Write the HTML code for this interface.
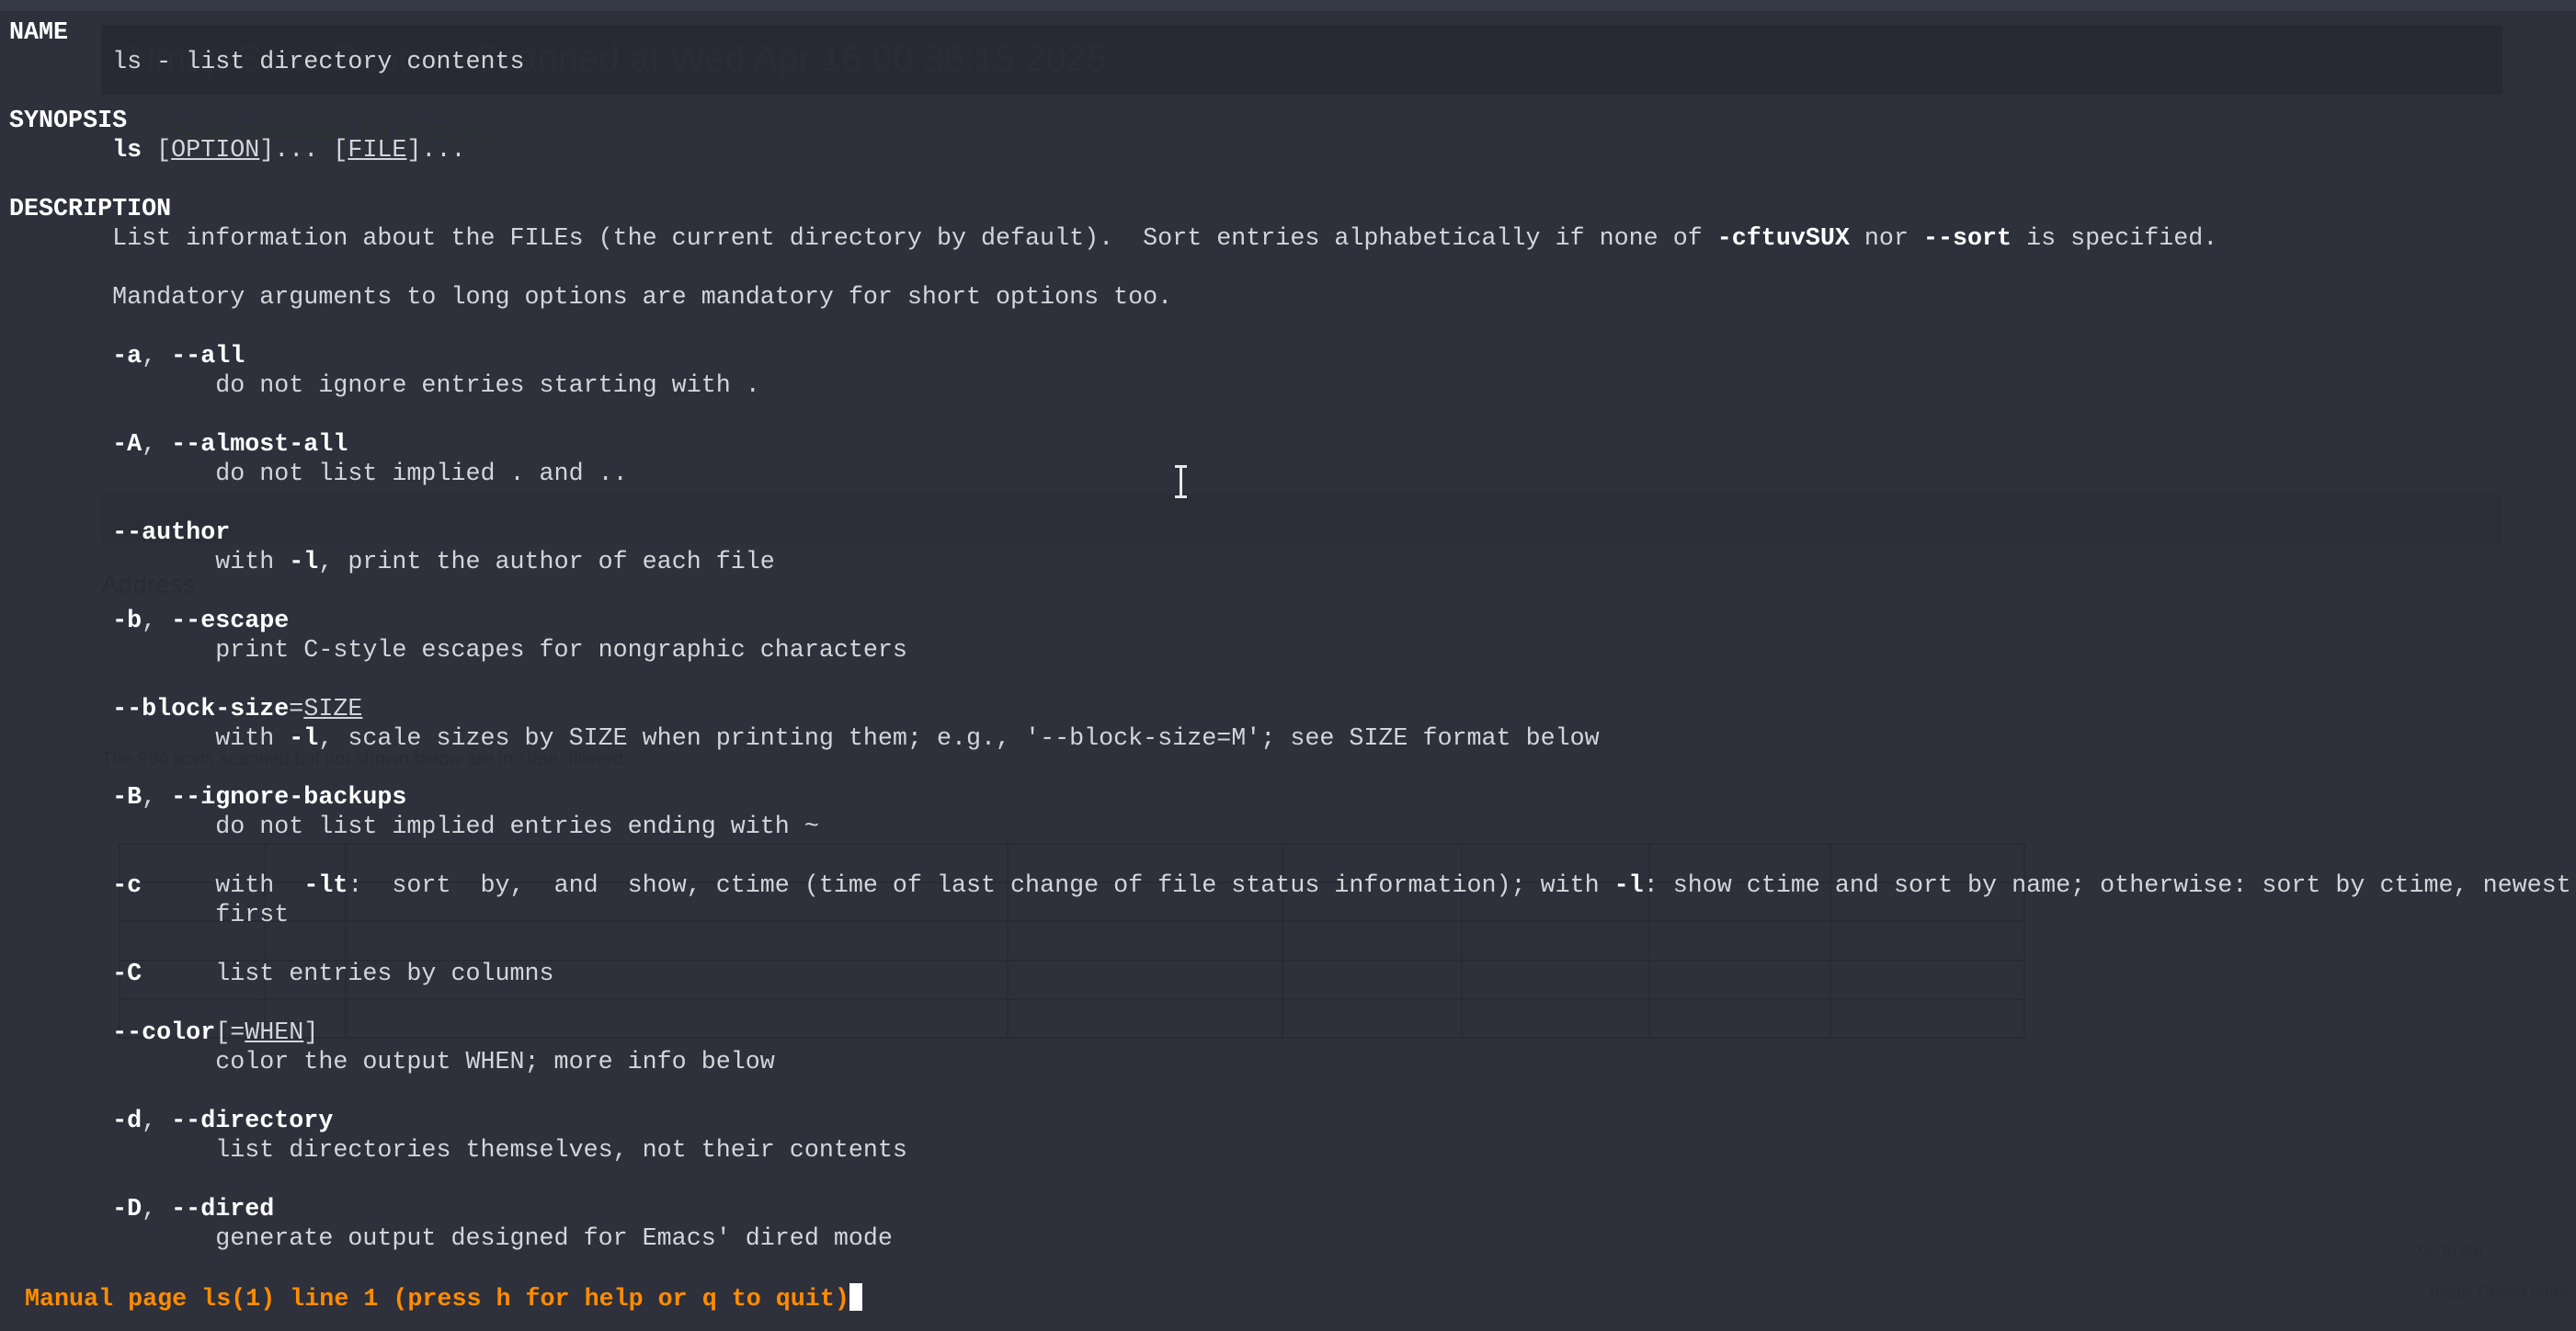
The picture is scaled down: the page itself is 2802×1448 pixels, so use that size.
<!DOCTYPE html>
<html><head><meta charset="utf-8">
<style>
html,body{margin:0;padding:0;}
body{width:2802px;height:1448px;background:#2e303b;position:relative;overflow:hidden;font-family:"Liberation Mono",monospace;}
.top{position:absolute;left:0;top:0;width:2802px;height:12px;background:#363946;}
.ghost{position:absolute;background:#282a33;}
.gt{position:absolute;font-family:"Liberation Sans",sans-serif;color:#2a2c35;white-space:nowrap;}
table.g{position:absolute;left:129px;top:917px;width:2074px;height:213px;border-collapse:collapse;table-layout:fixed;}
table.g td{border:2px solid #292b34;}
pre{position:absolute;left:10px;top:20px;margin:0;font-family:"Liberation Mono",monospace;font-size:26.7px;line-height:32px;color:#d4d5da;}
b{color:#ffffff;font-weight:bold;}
u{text-decoration:underline;}
.st{color:#ff8c00;font-weight:bold;margin-left:17px;}
.cur{display:inline-block;width:14px;height:30px;background:#fff;vertical-align:-6px;}
.ib{position:absolute;left:1283px;top:506px;width:3px;height:36px;background:#e8e8e8;}
.ib:before,.ib:after{content:"";position:absolute;left:-5px;width:13px;height:3px;background:#e8e8e8;}
.ib:before{top:0}.ib:after{bottom:0}
</style></head><body>
<div class="top"></div>
<div class="ghost" style="left:110px;top:27px;width:2612px;height:76px;"></div>
<div class="gt" style="left:140px;top:42px;font-size:40px;color:#2b2d36;">Nmap Scan Report - Scanned at Wed Apr 16 00:36:15 2025</div>
<div class="ghost" style="left:110px;top:538px;width:2612px;height:53px;background:#2b2d37;"></div>
<div class="gt" style="left:190px;top:128px;font-size:28px;color:#2b3530;">Scan Summary  10.10.10.63</div>
<div class="gt" style="left:110px;top:620px;font-size:28px;">Address</div>
<div class="gt" style="left:110px;top:815px;font-size:20px;">The 996 ports scanned but not shown below are in state: filtered</div>
<div class="gt" style="left:2630px;top:1350px;font-size:17px;">Go to top</div>
<div class="gt" style="left:2640px;top:1396px;font-size:17px;">Toggle Closed Ports</div>
<table class="g"><tr><td style="width:154px"></td><td style="width:84px"></td><td style="width:716px"></td><td style="width:295px"></td><td style="width:191px"></td><td style="width:200px"></td><td style="width:193px"></td><td></td></tr>
<tr><td></td><td></td><td></td><td></td><td></td><td></td><td></td><td></td></tr>
<tr><td></td><td></td><td></td><td></td><td></td><td></td><td></td><td></td></tr>
<tr><td></td><td></td><td></td><td></td><td></td><td></td><td></td><td></td></tr>
<tr><td></td><td></td><td></td><td></td><td></td><td></td><td></td><td></td></tr></table>
<pre><b>NAME</b>
       ls - list directory contents

<b>SYNOPSIS</b>
       <b>ls</b> [<u>OPTION</u>]... [<u>FILE</u>]...

<b>DESCRIPTION</b>
       List information about the FILEs (the current directory by default).  Sort entries alphabetically if none of <b>-cftuvSUX</b> nor <b>--sort</b> is specified.

       Mandatory arguments to long options are mandatory for short options too.

       <b>-a</b>, <b>--all</b>
              do not ignore entries starting with .

       <b>-A</b>, <b>--almost-all</b>
              do not list implied . and ..

       <b>--author</b>
              with <b>-l</b>, print the author of each file

       <b>-b</b>, <b>--escape</b>
              print C-style escapes for nongraphic characters

       <b>--block-size</b>=<u>SIZE</u>
              with <b>-l</b>, scale sizes by SIZE when printing them; e.g., '--block-size=M'; see SIZE format below

       <b>-B</b>, <b>--ignore-backups</b>
              do not list implied entries ending with ~

       <b>-c</b>     with  <b>-lt</b>:  sort  by,  and  show, ctime (time of last change of file status information); with <b>-l</b>: show ctime and sort by name; otherwise: sort by ctime, newest
              first

       <b>-C</b>     list entries by columns

       <b>--color</b>[=<u>WHEN</u>]
              color the output WHEN; more info below

       <b>-d</b>, <b>--directory</b>
              list directories themselves, not their contents

       <b>-D</b>, <b>--dired</b>
              generate output designed for Emacs' dired mode

<span class="st">Manual page ls(1) line 1 (press h for help or q to quit)</span><span class="cur"></span></pre>
<div class="ib"></div>
</body></html>
